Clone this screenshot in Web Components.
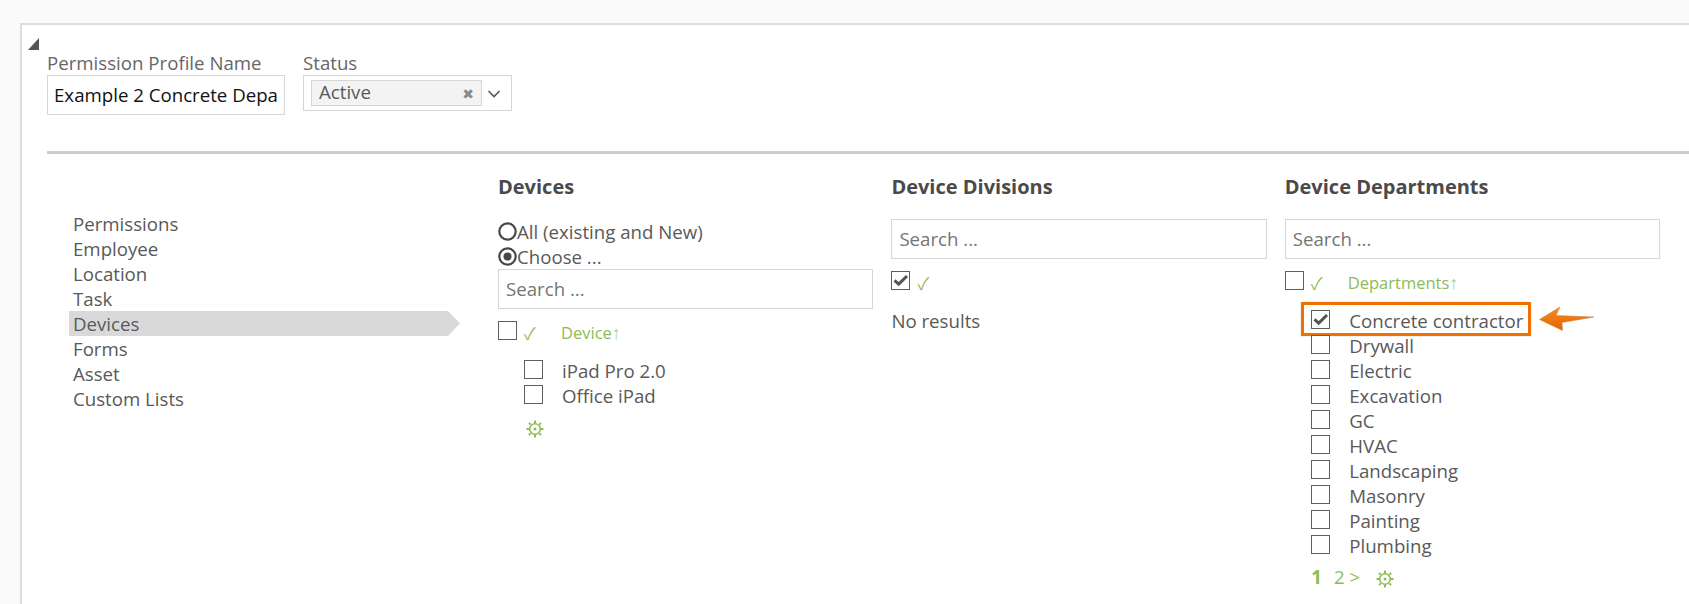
<!DOCTYPE html>
<html><head><meta charset="utf-8">
<style>
html,body{margin:0;padding:0;height:604px;overflow:hidden;background:#fafafa;font-family:"Open Sans",sans-serif;font-size:18.67px;color:#595959}
</style></head><body>
<profile-page></profile-page>
<script>
const GEAR=`<svg width="18" height="18" viewBox="0 0 18 18" style="display:block"><g fill="none" stroke="#8dbb55"><circle cx="9" cy="9" r="5.300" stroke-width="1.600"/><circle cx="9" cy="9" r="1.500" fill="#8dbb55" stroke="none"/><path stroke-width="2" d="M9 .5v3M9 14.500v3M.5 9h3M14.500 9h3M3 3l1.500 1.500M13.500 13.500L15 15M15 3l-1.500 1.500M4.500 13.500L3 15"/></g></svg>`;
customElements.define('x-check',class extends HTMLElement{
 connectedCallback(){const s=this.attachShadow({mode:'open'});
 const on=this.hasAttribute('checked');
 s.innerHTML=`<style>:host{display:block;width:19px;height:19px;flex:none}
 .b{display:block;width:19px;height:19px;border:1px solid #5f5f5f;background:#fff;box-sizing:border-box}svg{display:block}</style>
 <span class="b">${on?'<svg width="17" height="17" viewBox="0 0 17 17"><path d="M2.500 8.300l4.200 3.800L15 4" fill="none" stroke="#555" stroke-width="3"/></svg>':''}</span>`;}
});
customElements.define('x-search',class extends HTMLElement{
 connectedCallback(){const s=this.attachShadow({mode:'open'});
 s.innerHTML=`<style>:host{display:block;height:40px;border:1px solid #d6d6d6;background:#fff;padding:0 7px;line-height:38px;color:#757575;box-sizing:border-box}</style>Search ...`;}
});
customElements.define('x-head-row',class extends HTMLElement{
 connectedCallback(){const s=this.attachShadow({mode:'open'});
 const label=this.getAttribute('label');
 s.innerHTML=`<style>:host{display:flex;align-items:flex-start;height:25px}
 .t{width:37px;margin-left:7px;color:#8dbb55;font-size:17px;line-height:23px;height:25px;font-family:"Noto Sans CJK SC","DejaVu Sans",sans-serif;flex:none;white-space:nowrap}
 .l{color:#8dbb55;font-size:16.5px;line-height:23px;height:25px;white-space:nowrap}
 .a{color:#a9cf84;font-size:18px;line-height:18px;font-family:"Liberation Sans",sans-serif}</style>
 <x-check ${this.hasAttribute('checked')?'checked':''}></x-check><span class="t">✓</span>${label?`<span class="l">${label}<span class="a">↑</span></span>`:''}`;}
});
customElements.define('x-item',class extends HTMLElement{
 connectedCallback(){const s=this.attachShadow({mode:'open'});
 const hl=this.hasAttribute('highlight');
 s.innerHTML=`<style>:host{display:flex;position:relative;height:25px;line-height:21px;align-items:flex-start}
 x-check{margin-right:19px}
 .box{position:absolute;left:-10px;top:-8px;width:230px;height:34px;box-sizing:border-box;border:3px solid #f07000;border-radius:1px;box-shadow:0 0 1px #a4602a}
 .arrow{position:absolute;left:227.500px;top:-4px;display:block}</style>
 <x-check ${this.hasAttribute('checked')?'checked':''}></x-check><slot></slot>
 ${hl?`<span class="box"></span><svg class="arrow" width="58" height="27" viewBox="0 0 58 27"><defs><linearGradient id="g" x1="0" y1="0" x2="0" y2="1"><stop offset="0" stop-color="#fa8a20"/><stop offset="1" stop-color="#e06400"/></linearGradient></defs><path d="M.5 13.500L21 1l-4 8.500 38 1.500L23 16.500l.5 8z" fill="url(#g)" stroke="#c9793a" stroke-width=".5"/></svg>`:''}`;}
});
customElements.define('x-radio',class extends HTMLElement{
 connectedCallback(){const s=this.attachShadow({mode:'open'});
 const on=this.hasAttribute('checked');
 s.innerHTML=`<style>:host{display:flex;height:25px;line-height:25px;align-items:center}
 svg{flex:none}</style>
 <svg width="19" height="19" viewBox="0 0 19 19"><circle cx="9.500" cy="9.500" r="8.200" fill="#fff" stroke="#474747" stroke-width="2.200"/>${on?'<circle cx="9.500" cy="9.500" r="4" fill="#474747"/>':''}</svg><slot></slot>`;}
});
customElements.define('x-menu',class extends HTMLElement{
 connectedCallback(){const s=this.attachShadow({mode:'open'});
 const items=['Permissions','Employee','Location','Task','Devices','Forms','Asset','Custom Lists'];
 s.innerHTML=`<style>:host{display:block;width:391px}
 div{height:25px;line-height:25px;padding-left:4px}
 .on{background:#d9d9d9;clip-path:polygon(0 0,379px 0,391px 50%,379px 100%,0 100%)}</style>
 ${items.map(i=>`<div class="${i=='Devices'?'on':''}">${i}</div>`).join('')}`;}
});
customElements.define('x-column',class extends HTMLElement{
 connectedCallback(){const s=this.attachShadow({mode:'open'});
 s.innerHTML=`<style>:host{display:block;width:375.2px}
 h3{margin:0 0 19px;font-size:20px;font-weight:700;line-height:26px;color:#4a4a4a}</style>
 <h3>${this.getAttribute('title')}</h3><slot></slot>`;}
});
customElements.define('x-pager',class extends HTMLElement{
 connectedCallback(){const s=this.attachShadow({mode:'open'});
 s.innerHTML=`<style>:host{display:flex;align-items:flex-start;color:#8dbb55;height:28px;line-height:25px}
 b{margin:4px 12px 0 0}span{margin:4px 16px 0 0}.g{margin:10px 0 0}</style>
 <b>1</b><span>2 &gt;</span><div class="g">${GEAR}</div>`;}
});
customElements.define('profile-page',class extends HTMLElement{
 connectedCallback(){const s=this.attachShadow({mode:'open'});
 s.innerHTML=`<style>*{box-sizing:border-box}
 :host{display:block;padding:23px 0 0 20px}
 .card{background:#fff;border:2px solid #ddd;border-right:0;border-bottom:0;height:581px;padding:25px 0 0 25px;position:relative}
 .tri{position:absolute;left:6px;top:13px;width:0;height:0;border-left:11px solid transparent;border-bottom:12px solid #555}
 .top{display:flex;gap:18px;height:101px}
 label{display:block;line-height:25px;color:#666}
 .inp{width:238px;height:40px;border:1px solid #d6d6d6;padding:0 0 0 6px;color:#111;line-height:38px;white-space:nowrap}
 .sel{width:209px;height:36px;border:1px solid #d6d6d6;padding:4px 7px;display:flex;align-items:flex-start}
 .chip{flex:none;width:171px;height:26px;background:#f3f3f3;border:1px solid #d6d6d6;line-height:22px;padding:0 7px;display:flex;justify-content:space-between;align-items:flex-start}
 .x{color:#8a8a8a;font-size:14px;line-height:27px;font-family:"DejaVu Sans",sans-serif}
 hr{border:0;height:3px;background:#ccc;margin:0}
 .main{display:flex}
 .side{padding-top:57px;margin-left:22px;margin-right:38px;flex:none}
 .cols{display:flex;gap:18.2px;padding-top:20px}
 .gr{margin-top:12px}
 .list{margin-top:14px;margin-left:26px}
 .nr{margin-top:12px;line-height:25px}
 .gear{margin:10px 0 0 28px;display:block}
 </style>
 <div class="card"><span class="tri"></span>
  <div class="top">
   <div><label>Permission Profile Name</label><div class="inp">Example 2 Concrete Depa</div></div>
   <div><label>Status</label><div class="sel"><div class="chip">Active<span class="x">✖</span></div>
    <svg width="14" height="26" viewBox="0 0 14 26" style="margin-left:5px;flex:none"><path d="M1.500 11l5.500 5.500 5.500-5.500" fill="none" stroke="#555" stroke-width="1.600"/></svg></div></div>
  </div>
  <hr>
  <div class="main">
   <div class="side"><x-menu></x-menu></div>
   <div class="cols">
    <x-column title="Devices">
     <x-radio>All (existing and New)</x-radio><x-radio checked>Choose ...</x-radio>
     <x-search></x-search>
     <x-head-row class="gr" label="Device"></x-head-row>
     <div class="list"><x-item>iPad Pro 2.0</x-item><x-item>Office iPad</x-item></div>
     <span class="gear">${GEAR}</span>
    </x-column>
    <x-column title="Device Divisions">
     <x-search></x-search>
     <x-head-row class="gr" checked></x-head-row>
     <div class="nr">No results</div>
    </x-column>
    <x-column title="Device Departments">
     <x-search></x-search>
     <x-head-row class="gr" label="Departments"></x-head-row>
     <div class="list" style="margin-left:26.500px">
      <x-item highlight checked>Concrete contractor</x-item>
      <x-item>Drywall</x-item><x-item>Electric</x-item><x-item>Excavation</x-item><x-item>GC</x-item><x-item>HVAC</x-item><x-item>Landscaping</x-item><x-item>Masonry</x-item><x-item>Painting</x-item><x-item>Plumbing</x-item>
      <x-pager></x-pager>
     </div>
    </x-column>
   </div>
  </div>
 </div>`;}
});
</script>
</body></html>
